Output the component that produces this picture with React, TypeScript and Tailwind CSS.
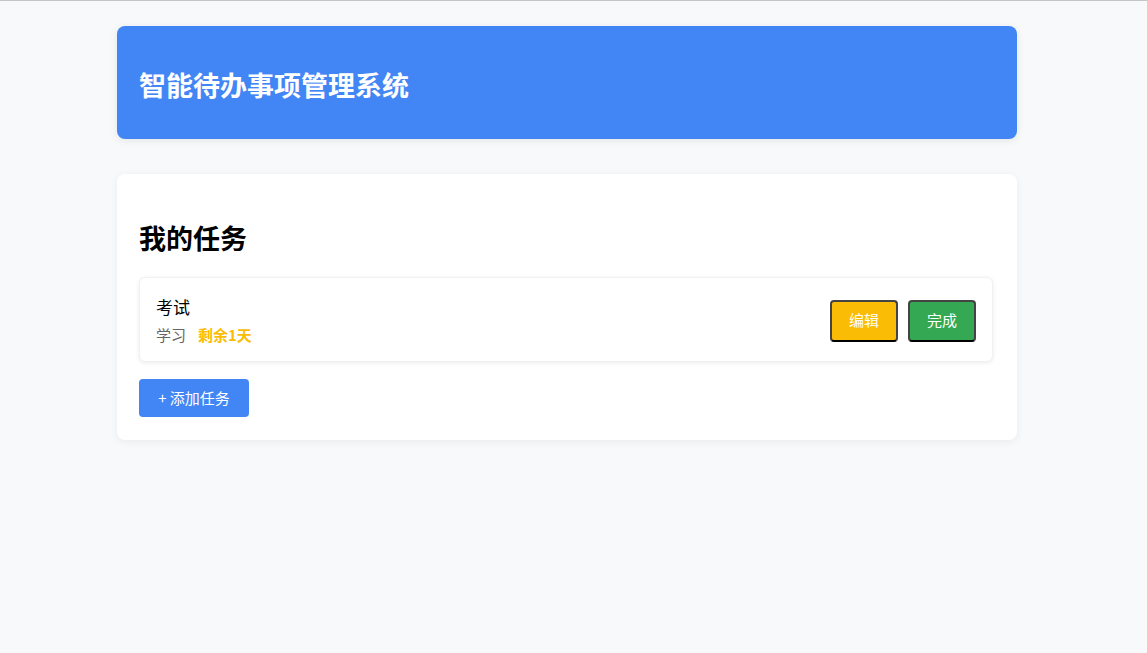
const font = { fontFamily: '"Microsoft YaHei", "Noto Sans CJK SC", "Noto Sans", sans-serif' };

const TaskItem = ({ title, category, remain }: { title: string; category: string; remain: string }) => {
  return (
    <div className="mr-[2px] flex items-center justify-between rounded-md border border-[#f1f1f1] bg-white pl-[16px] pr-[16px] pt-[17px] pb-[15px] shadow-[0_1px_4px_rgba(0,0,0,0.08)]">
      <div>
        <div className="text-[17px] leading-[24px] text-black">{title}</div>
        <div className="mt-[5px] flex items-center text-[15px] leading-[22px]">
          <span className="text-[#666]">{category}</span>
          <span className="ml-[12px] font-bold text-[#fbbc05]">{remain}</span>
        </div>
      </div>
      <div className="flex gap-[10px]">
        <button className="h-[42px] w-[68px] rounded-[4px] border-2 border-[#444] border-b-black bg-[#fbbc05] text-[15px] text-white">
          编辑
        </button>
        <button className="h-[42px] w-[68px] rounded-[4px] border-2 border-[#444] border-b-black bg-[#34a853] text-[15px] text-white">
          完成
        </button>
      </div>
    </div>
  );
};

export default function App() {
  return (
    <div className="min-h-screen border-t border-[#c6c6c6] bg-[#f8f9fa]" style={font}>
      <div className="w-[900px] ml-[117px] pt-[25px]">
        <div className="rounded-lg bg-[#4285f4] pl-[22px] pt-[39px] pb-[34px] shadow-[0_2px_8px_rgba(0,0,0,0.08)]">
          <h1 className="text-[27px] font-bold leading-[40px] text-white">智能待办事项管理系统</h1>
        </div>

        <div className="mt-[35px] rounded-lg bg-white px-[22px] pt-[44px] pb-[23px] shadow-[0_2px_8px_rgba(0,0,0,0.06)]">
          <h2 className="mb-[19px] text-[27px] font-bold leading-[40px] text-black">我的任务</h2>
          <TaskItem title="考试" category="学习" remain="剩余1天" />
          <button className="mt-[17px] h-[38px] w-[110px] rounded-[4px] bg-[#4285f4] text-[15px] text-white">
            + 添加任务
          </button>
        </div>
      </div>
    </div>
  );
}
